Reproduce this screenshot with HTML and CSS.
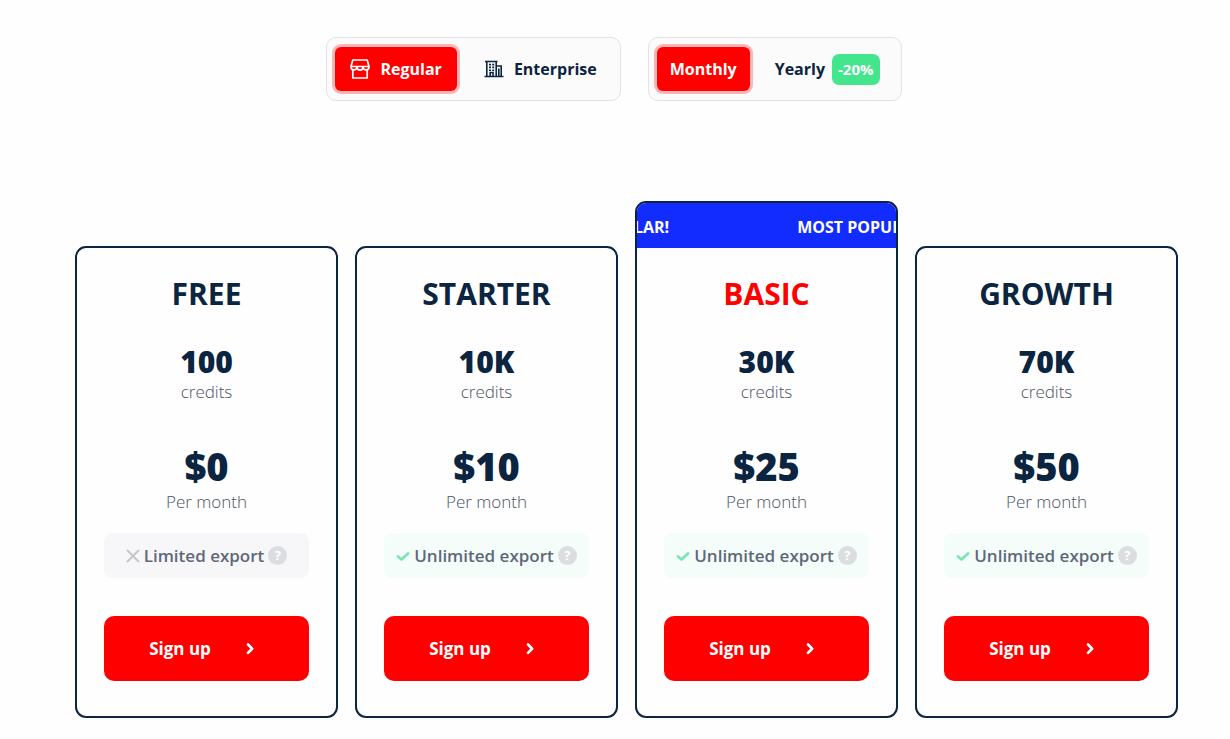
FILE: index.html
```
<!doctype html>
<html lang="en">
  <head>
    <meta charset="UTF-8" />
    <meta name="viewport" content="width=device-width, initial-scale=1.0" />
    <title>Pricing</title>
    <link rel="stylesheet" href="styles.css">
  </head>
  <body>
    <!-- shared icons -->
    <svg class="sprite" aria-hidden="true">
      <symbol id="icon-check" viewBox="0 0 14 14">
        <path d="M2 7.5l3.5 3L12 4.500" fill="none" stroke="currentColor" stroke-width="2.8" stroke-linecap="round" stroke-linejoin="round" />
      </symbol>
      <symbol id="icon-cross" viewBox="0 0 14 14">
        <path d="M1.5 1.5l11 11M12.5 1.5l-11 11" fill="none" stroke="currentColor" stroke-width="2" stroke-linecap="round" />
      </symbol>
      <symbol id="icon-chevron" viewBox="0 0 10 14">
        <path d="M3 2.500L7.200 6.700 3 10.900" fill="none" stroke="currentColor" stroke-width="2.700" stroke-linecap="round" stroke-linejoin="round" />
      </symbol>
    </svg>

    <div class="toggles">
      <div class="toggle">
        <button type="button" class="toggle-btn active">
          <svg class="toggle-icon" viewBox="0 0 20 20" fill="none" stroke="currentColor" stroke-width="1.7" stroke-linejoin="round" stroke-linecap="round" aria-hidden="true">
            <path d="M2.800 1h14.400L19 7.500a3 3.200 0 0 1-6 .5 3 3.200 0 0 1-6 0 3 3.200 0 0 1-6-.5zM1.200 7.500h17.600M2.800 11.500V19h14.400v-7.500" />
          </svg>
          Regular
        </button>
        <button type="button" class="toggle-btn">
          <svg class="toggle-icon" viewBox="0 0 20 20" fill="none" stroke="currentColor" stroke-width="1.6" aria-hidden="true">
            <path d="M.5 17.500h19M2.800 17V2.500h9.400V17M12.200 7h5v10M1 2.500h12.500M6.200 17v-3.500h2.800V17M14.800 9.500v8" />
            <path d="M5 5.600h2M8.200 5.600h2M5 8.400h2M8.200 8.400h2M5 11.200h2M8.200 11.200h2" />
          </svg>
          Enterprise
        </button>
      </div>
      <div class="toggle">
        <button type="button" class="toggle-btn compact active">Monthly</button>
        <button type="button" class="toggle-btn compact">Yearly <span class="discount">-20%</span></button>
      </div>
    </div>

    <div class="plans">
      <div class="plan">
        <h2>FREE</h2>
        <p class="credits">100</p>
        <p class="label">credits</p>
        <p class="price">$0</p>
        <p class="label">Per month</p>
        <div class="export limited">
          <svg class="mark" aria-hidden="true"><use href="#icon-cross" /></svg>
          <span>Limited export</span>
          <button type="button" class="help" aria-label="About export">?</button>
        </div>
        <a href="#" class="signup">Sign up <svg aria-hidden="true"><use href="#icon-chevron" /></svg></a>
      </div>

      <div class="plan">
        <h2>STARTER</h2>
        <p class="credits">10K</p>
        <p class="label">credits</p>
        <p class="price">$10</p>
        <p class="label">Per month</p>
        <div class="export">
          <svg class="mark" aria-hidden="true"><use href="#icon-check" /></svg>
          <span>Unlimited export</span>
          <button type="button" class="help" aria-label="About export">?</button>
        </div>
        <a href="#" class="signup">Sign up <svg aria-hidden="true"><use href="#icon-chevron" /></svg></a>
      </div>

      <div class="plan popular">
        <div class="ticker">
          <div class="ticker-track">
            <span>MOST POPULAR!</span>
            <span>MOST POPULAR!</span>
          </div>
        </div>
        <h2>BASIC</h2>
        <p class="credits">30K</p>
        <p class="label">credits</p>
        <p class="price">$25</p>
        <p class="label">Per month</p>
        <div class="export">
          <svg class="mark" aria-hidden="true"><use href="#icon-check" /></svg>
          <span>Unlimited export</span>
          <button type="button" class="help" aria-label="About export">?</button>
        </div>
        <a href="#" class="signup">Sign up <svg aria-hidden="true"><use href="#icon-chevron" /></svg></a>
      </div>

      <div class="plan">
        <h2>GROWTH</h2>
        <p class="credits">70K</p>
        <p class="label">credits</p>
        <p class="price">$50</p>
        <p class="label">Per month</p>
        <div class="export">
          <svg class="mark" aria-hidden="true"><use href="#icon-check" /></svg>
          <span>Unlimited export</span>
          <button type="button" class="help" aria-label="About export">?</button>
        </div>
        <a href="#" class="signup">Sign up <svg aria-hidden="true"><use href="#icon-chevron" /></svg></a>
      </div>
    </div>
  </body>
</html>
```
FILE: styles.css
```
* {
  box-sizing: border-box;
}
body {
  font-family: "Open Sans", "Noto Sans", sans-serif;
  margin: 0;
  color: #0b2440;
  background-color: #fefefe;
}
button {
  font-family: inherit;
  border: none;
  cursor: pointer;
}
.sprite {
  display: none;
}
.toggles {
  display: flex;
  flex-wrap: wrap;
  justify-content: center;
  gap: 27px;
  padding: 37px 18px 0 16px;
}
.toggle {
  display: flex;
  gap: 12px;
  padding: 9px 8px;
  background: #fbfbfc;
  border: 1px solid #e2e3e6;
  border-radius: 10px;
}
.toggle-btn {
  display: flex;
  align-items: center;
  gap: 10px;
  height: 44px;
  padding: 0 15px;
  font-size: 16px;
  font-weight: 700;
  color: #0b2440;
  background: none;
  border-radius: 6px;
}
.toggle-btn.compact {
  gap: 7px;
  padding: 0 13px;
}
.toggle-btn.active {
  color: white;
  background: #ff0000;
  box-shadow: 0 0 0 3px #ffb5b8;
}
.toggle-icon {
  width: 20px;
  height: 20px;
}
.discount {
  padding: 0 6px;
  line-height: 31px;
  font-size: 15px;
  color: white;
  background: #43e58d;
  border-radius: 7px;
}
.plans {
  display: grid;
  grid-template-columns: repeat(4, 1fr);
  align-items: end;
  gap: 17px;
  padding: 100px 52px 21px 75px;
}
.plan {
  padding: 24px 27px 35px;
  text-align: center;
  background: #fefefe;
  border: 2px solid #0b2440;
  border-radius: 11px;
  overflow: hidden;
}
.plan.popular {
  padding-top: 0;
}
.plan h2 {
  margin: 0 0 28px;
  font-size: 30px;
  line-height: 44px;
  font-weight: 700;
}
.plan.popular h2 {
  margin-top: 24px;
  color: #ff0000;
}
.plan p {
  margin: 0;
}
.plan .credits {
  font-size: 30px;
  line-height: 36px;
  font-weight: 800;
}
.plan .label {
  font-size: 17px;
  line-height: 24px;
  font-weight: 300;
  color: #4b5363;
}
.plan .price {
  margin-top: 38px;
  font-size: 38px;
  line-height: 48px;
  font-weight: 800;
}
.ticker {
  margin: 0 -27px;
  padding-top: 3px;
  overflow: hidden;
  background: #122bff;
}
.ticker-track {
  display: flex;
  gap: 128px;
  margin-left: -98px;
  font-size: 16px;
  line-height: 42px;
  font-weight: 700;
  color: white;
  white-space: nowrap;
}
.export {
  display: flex;
  justify-content: center;
  align-items: center;
  gap: 4px;
  height: 45px;
  margin: 19px 0 38px;
  font-size: 17px;
  font-weight: 600;
  color: #5f6878;
  white-space: nowrap;
  background: #f5fdfb;
  border-radius: 8px;
}
.export.limited {
  background: #f7f7f9;
}
.mark {
  width: 14px;
  height: 14px;
  color: #7be3b5;
}
.limited .mark {
  color: #c5c8cc;
}
.help {
  width: 19px;
  height: 19px;
  padding: 0;
  font-size: 13px;
  line-height: 19px;
  font-weight: 700;
  color: white;
  background: #dcdde1;
  border-radius: 50%;
}
.signup {
  display: flex;
  justify-content: center;
  align-items: center;
  gap: 34px;
  height: 65px;
  padding-right: 9px;
  font-size: 17px;
  font-weight: 700;
  color: white;
  text-decoration: none;
  background: #ff0000;
  border-radius: 10px;
}
.signup svg {
  width: 10px;
  height: 14px;
}
@media (max-width: 1000px) {
  .plans {
    grid-template-columns: repeat(2, 1fr);
    padding: 60px 20px 20px;
  }
}
```
